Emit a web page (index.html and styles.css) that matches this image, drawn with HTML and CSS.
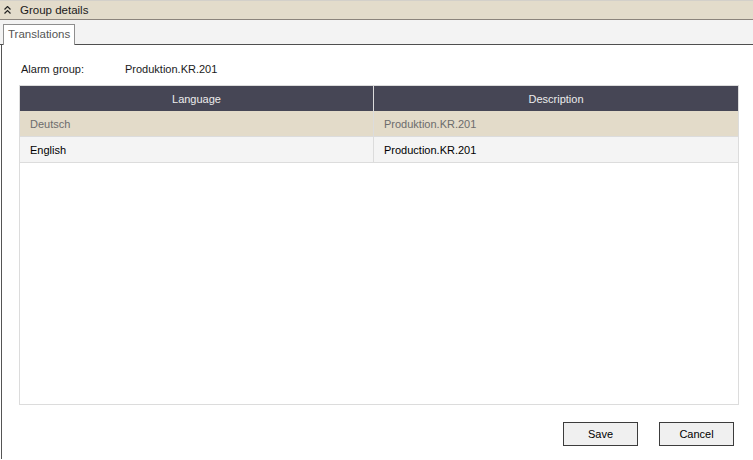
FILE: index.html
```html
<!DOCTYPE html>
<html lang="en">
<head>
  <meta charset="UTF-8" />
  <title>Group details</title>
  <link rel="stylesheet" href="styles.css">
</head>
<body>
  <div class="group-header">
    <svg class="collapse-icon" width="7" height="8" viewBox="0 0 7 8">
      <path d="M0.5 3.5 L3.5 0.5 L6.5 3.5 M0.5 7.5 L3.5 4.5 L6.5 7.5" fill="none" stroke="#222" stroke-width="1.2"/>
    </svg>
    <span>Group details</span>
  </div>

  <div class="tab-strip">
    <div class="tab">Translations</div>
  </div>

  <div class="content">
    <div class="field-row">
      <span class="field-label">Alarm group:</span>
      <span class="field-value">Produktion.KR.201</span>
    </div>

    <div class="grid">
      <div class="grid-row grid-head">
        <div class="cell col-lang">Language</div>
        <div class="cell col-desc">Description</div>
      </div>
      <div class="grid-row selected">
        <div class="cell col-lang">Deutsch</div>
        <div class="cell col-desc">Produktion.KR.201</div>
      </div>
      <div class="grid-row">
        <div class="cell col-lang">English</div>
        <div class="cell col-desc">Production.KR.201</div>
      </div>
    </div>

    <div class="actions">
      <button>Save</button>
      <button>Cancel</button>
    </div>
  </div>
</body>
</html>
```

FILE: styles.css
```css
body {
  font-family: Tahoma, "Liberation Sans", Arial, sans-serif;
  font-size: 11px;
  color: #000;
  background: #fff;
  margin: 0;
  padding: 0;
  width: 753px;
  height: 460px;
  overflow: hidden;
}
.group-header {
  height: 18px;
  background: #e3dccb;
  border-top: 1px solid #d3d0ca;
  border-bottom: 1px solid #8b847c;
  display: flex;
  align-items: center;
  color: #1a1a1a;
  font-size: 11.5px;
}
.collapse-icon {
  margin: 0 9px 0 4px;
}
.tab-strip {
  height: 24px;
  background: #f3f3f3;
  border-bottom: 1px solid #4f4f4f;
  display: flex;
  align-items: flex-end;
  padding-left: 3px;
}
.tab {
  line-height: 18px;
  padding: 0 4px 0 4px;
  background: #fff;
  border: 1px solid #8e8e8e;
  border-bottom: none;
  margin-bottom: -1px;
  height: 20px;
  color: #555;
  font-size: 11.5px;
}
.content {
  margin-left: 1px;
  border-left: 1px solid #555;
  height: 414px;
  padding: 16px 15px 0 17px;
  box-sizing: border-box;
}
.field-row {
  display: flex;
  height: 16px;
  align-items: center;
  color: #1a1a1a;
}
.field-label {
  width: 104px;
  padding-left: 2px;
}
.grid {
  margin-top: 8px;
  height: 320px;
  width: 720px;
  border: 1px solid #dcdcdc;
  box-sizing: border-box;
}
.grid-row {
  display: flex;
  height: 26px;
  border-bottom: 1px solid #dcdcdc;
  background: #f4f4f4;
  box-sizing: border-box;
}
.grid-head {
  height: 25px;
  background: #464655;
  color: #ececec;
  border-bottom: none;
}
.grid-head .cell {
  justify-content: center;
  padding-left: 0;
}
.selected {
  background: #e3dbc9;
  color: #6c6c6c;
}
.cell {
  display: flex;
  align-items: center;
  padding-left: 10px;
  box-sizing: border-box;
}
.col-lang {
  width: 354px;
  border-right: 1px solid #dcdcdc;
}
.col-desc {
  flex: 1;
}
.actions {
  display: flex;
  justify-content: flex-end;
  gap: 21px;
  width: 715px;
  margin-top: 17px;
}
button {
  width: 75px;
  height: 24px;
  font-family: inherit;
  font-size: 11px;
  background: #f0f0f0;
  border: 1px solid #3c3c3c;
  padding: 0;
  color: #000;
}
```
